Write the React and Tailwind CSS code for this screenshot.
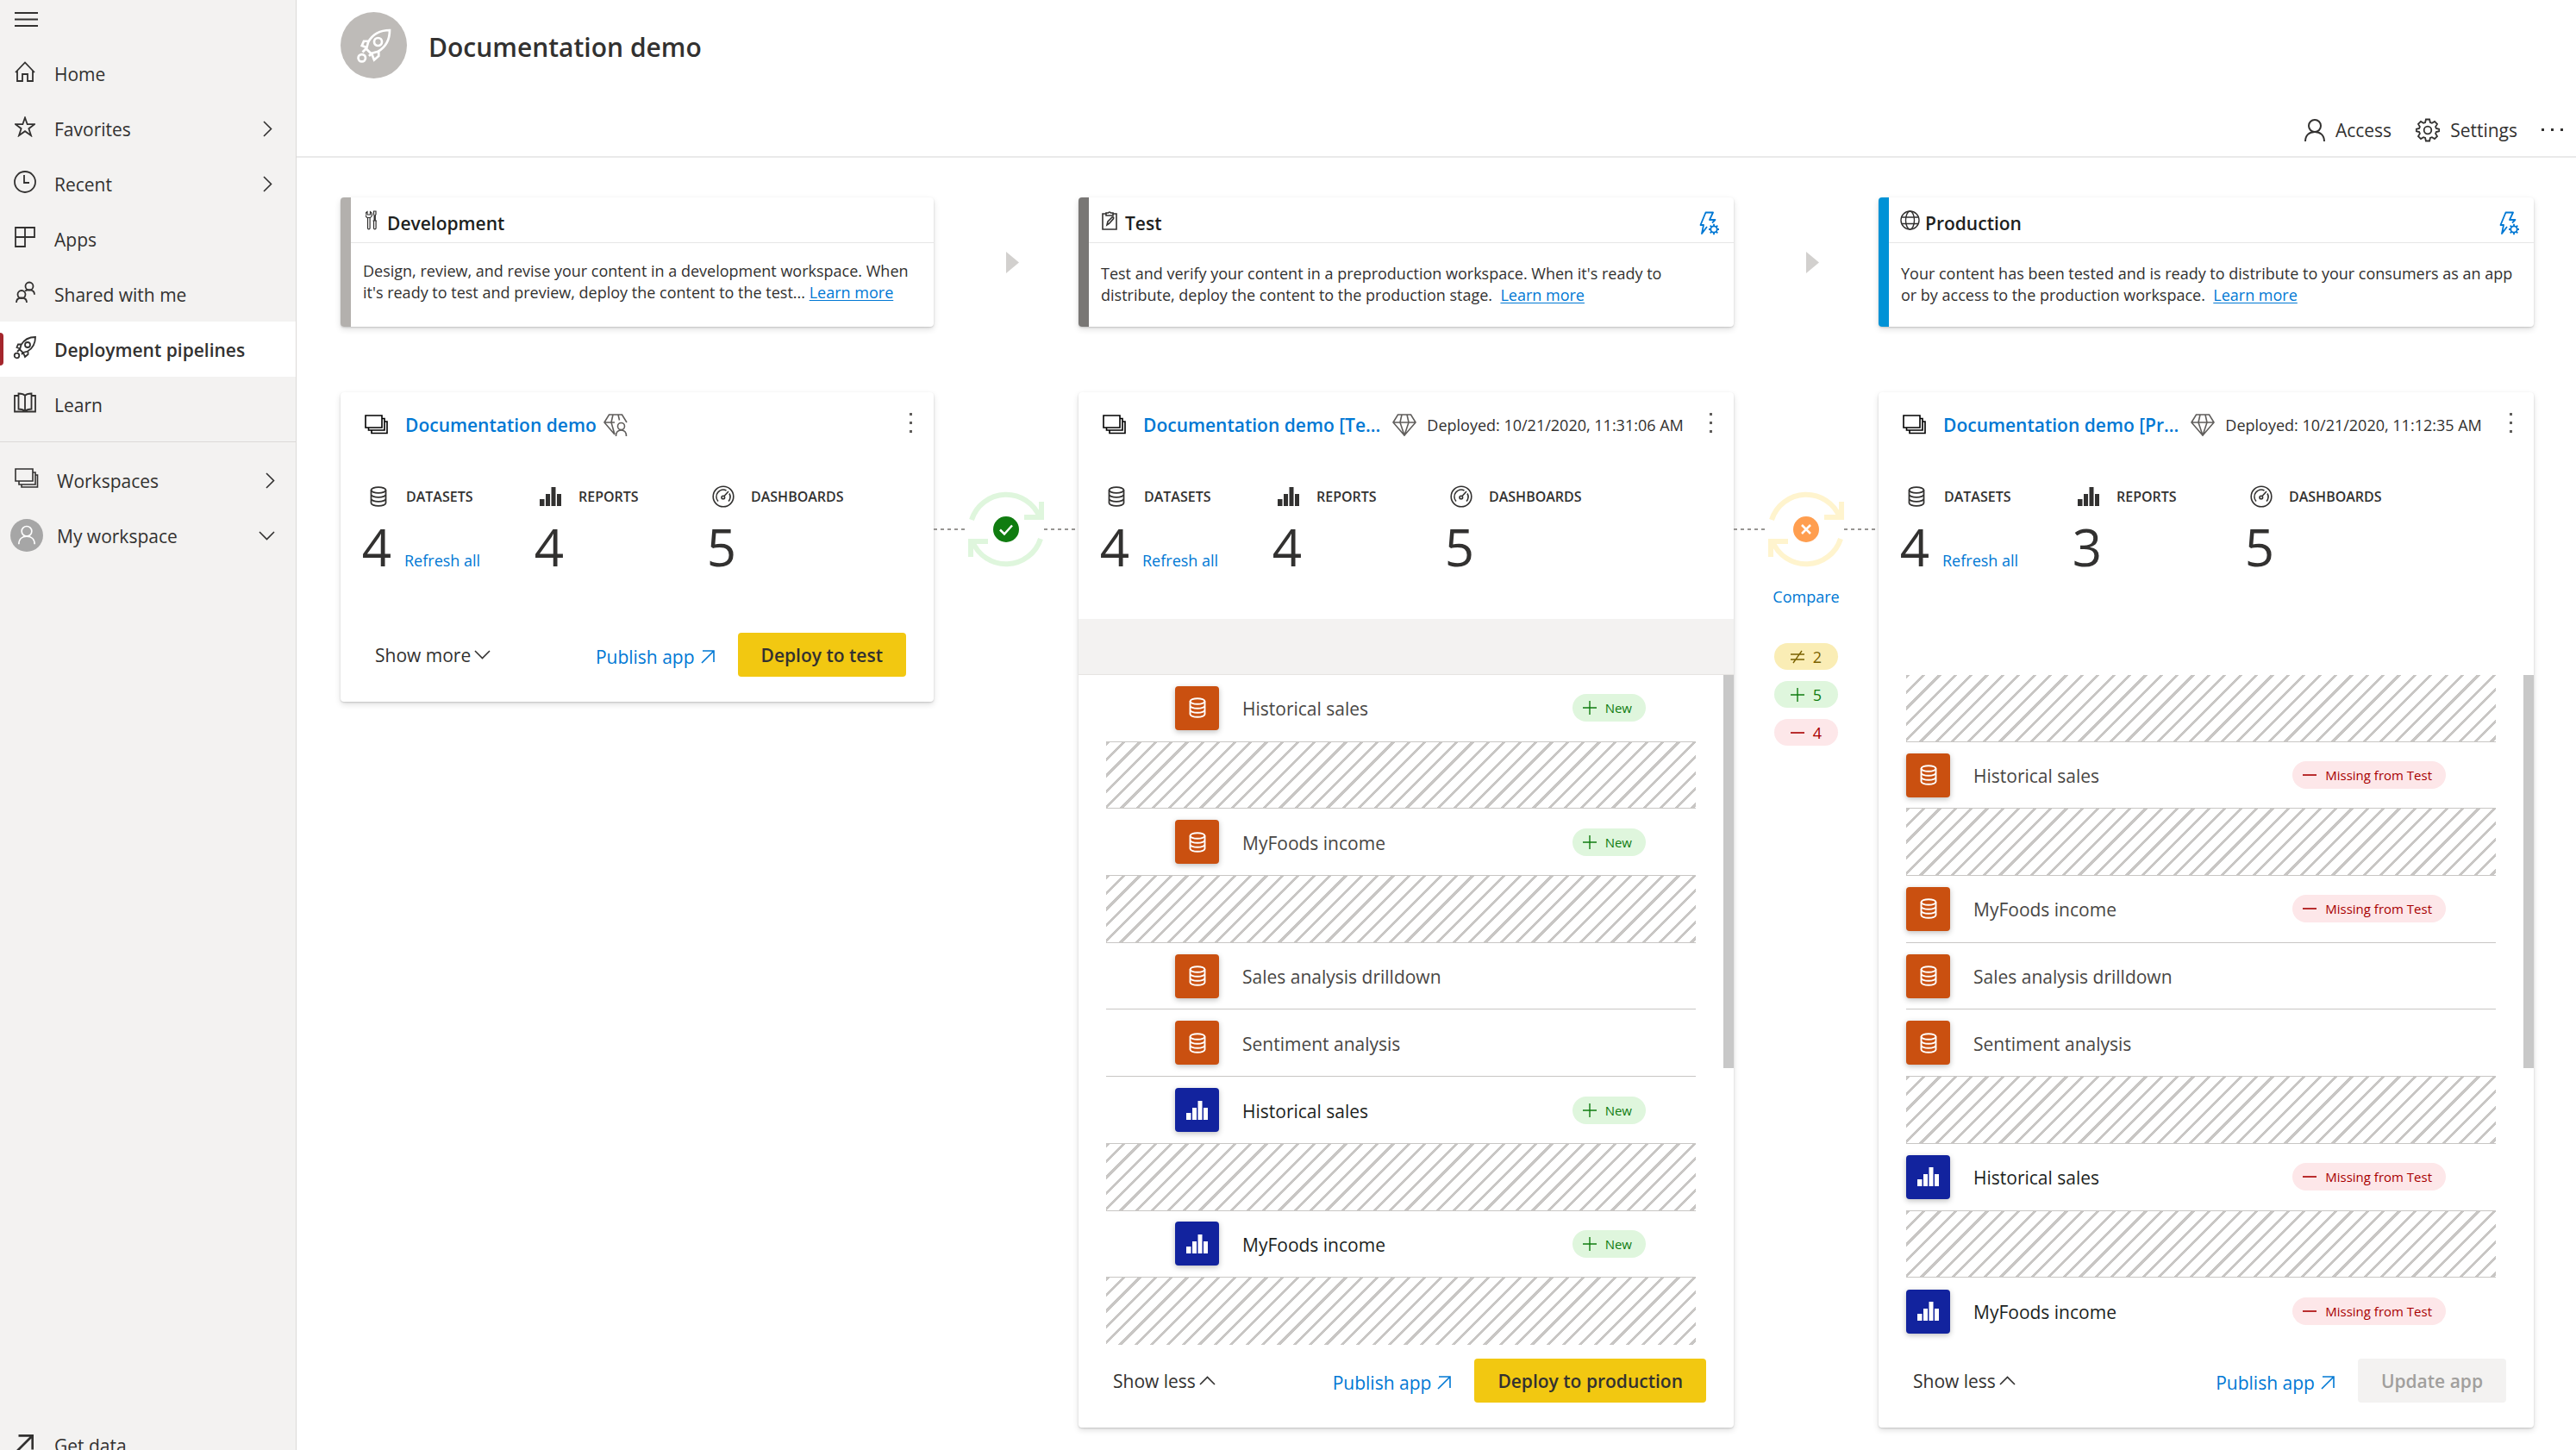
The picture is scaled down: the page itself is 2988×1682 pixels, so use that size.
function Svg({ w, h, vb, sw = 2, children, className = "" }) {
  return (
    <svg
      width={w}
      height={h}
      viewBox={vb || `0 0 ${w} ${h}`}
      fill="none"
      stroke="currentColor"
      strokeWidth={sw}
      className={"shrink-0 " + className}
      aria-hidden="true"
    >
      {children}
    </svg>
  );
}

const HomeIcon = () => (
  <Svg w={24} h={24} sw={1.800}>
    <path d="M1 13 12 1.500 23 13M3 11v12h6v-8h6v8h6V11" />
  </Svg>
);
const StarIcon = () => (
  <Svg w={24} h={24}>
    <path d="m12 1.500 2.700 7.700H23l-6.600 5 2.600 8-7-5-7 5 2.600-8L1 9.200h8.300z" strokeWidth="1.800" />
  </Svg>
);
const ClockIcon = () => (
  <Svg w={26} h={26} sw={1.800}>
    <circle cx="13" cy="13" r="12" />
    <path d="M12 5v9h6" />
  </Svg>
);
const AppsIcon = () => (
  <Svg w={24} h={24} sw={1.800}>
    <path d="M1 1h22v11H1zM1 12v11h11V1" />
  </Svg>
);
const PeopleIcon = () => (
  <Svg w={24} h={26} sw={1.800}>
    <circle cx="17" cy="6" r="4.500" />
    <circle cx="8" cy="15.500" r="4.500" />
    <path d="M2 25c0-3.500 2.500-5.500 6-5.500s6 2 6 5.500M12 11.500c1.500-1 3-1.200 5-1.200 3.500 0 6 2 6 5.500" />
  </Svg>
);
const RocketIcon = ({ size = 28 }) => (
  <Svg w={size} h={size} vb="0 0 28 28" sw={1.800}>
    <path d="M26 2C18 2 13 5 9.500 11L8 16.500l3.500 3.500 5.500-1.500C23 15 26 10 26 2zM10.500 10.500H6L4.500 14l4 1.500M17.500 17.500V22L14 25l-2-5M8 16l-3 3M12 20l-2 2" />
    <circle cx="17" cy="11" r="3" />
    <circle cx="4.500" cy="23.500" r="2.800" />
  </Svg>
);
const BookIcon = () => (
  <Svg w={26} h={24} sw={1.800}>
    <path d="M13 4C11 1.500 8 1.500 5.500 1.500v18c3 0 5.500.500 7.500 2.500 2-2 4.500-2.500 7.500-2.500v-18c-2.500 0-5.500 0-7.500 2.500zM13 4v18M5.500 4H1v18.500h24V4h-4.500" />
  </Svg>
);
const StackWideIcon = () => (
  <Svg w={28} h={24} sw={1.600}>
    <path d="M1 1h20v14H1zM21 5h3v14H5v-4M24 8h2.500v14H8v-3" />
  </Svg>
);
const StackIcon = () => (
  <Svg w={28} h={24} sw={1.600} className="text-black">
    <path d="M1 1h19v14H1zM20 4.500h3V18H4.500v-3M23 8h3v13.500H8V18" />
  </Svg>
);
const PersonIcon = ({ w = 24, h = 26, sw = 2 }) => (
  <Svg w={w} h={h} vb="0 0 24 26" sw={sw}>
    <circle cx="12" cy="8" r="7" />
    <path d="M1 26c0-7 4.500-11 11-11s11 4 11 11" />
  </Svg>
);
const GearIcon = () => (
  <Svg w={28} h={28} sw={1.800}>
    <path d="M11.900 1.500h4.200l.8 3.500 2 .8 3.100-1.900 3 3-1.900 3.100.8 2 3.500.8v2.400l-3.500.8-.8 2 1.900 3.100-3 3-3.100-1.900-2 .8-.8 3.500h-4.200l-.8-3.500-2-.8-3.100 1.900-3-3 1.900-3.100-.8-2-3.500-.8v-2.400l3.500-.8.8-2L3 6.900l3-3 3.100 1.900 2-.8z" />
    <circle cx="14" cy="14" r="4.300" />
  </Svg>
);
const ChevronRight = () => (
  <Svg w={11} h={19}>
    <path d="m1 1 8.500 8.500L1 18" strokeWidth="1.600" />
  </Svg>
);
const ChevronDown = () => (
  <Svg w={19} h={11}>
    <path d="m1 1 8.500 8.500L18 1" strokeWidth="1.600" />
  </Svg>
);
const ChevronUp = () => (
  <Svg w={19} h={11}>
    <path d="m1 10 8.500-8.500L18 10" strokeWidth="1.600" />
  </Svg>
);
const ToolsIcon = () => (
  <Svg w={14} h={23} sw={1.200}>
    <path d="M2.500 8.500v12a1.300 1.300 0 0 0 2.600 0v-12M2 1.500a4 4 0 0 0 0 7h3.500a4 4 0 0 0 0-7V5h-3.500zM9.500 1h2.500v3.500l-.7 1.500v6h-1.200V6l-.6-1.500zM8.500 12h4.500M9.500 12v8.500a1.300 1.300 0 0 0 2.600 0V12" />
  </Svg>
);
const ClipboardIcon = () => (
  <Svg w={18} h={23} sw={1.600}>
    <path d="M5 4H1v18h16V4h-4M5 6V3h2.500a1.600 1.600 0 0 1 3 0H13v3zM6 17l1-4 5-5c1.500-.500 2 .500 1.500 1.700l-4.800 5.500z" />
  </Svg>
);
const GlobeIcon = () => (
  <Svg w={23} h={23} sw={1.400}>
    <circle cx="11.500" cy="11.500" r="10.500" />
    <ellipse cx="11.500" cy="11.500" rx="5" ry="10.500" />
    <path d="M2 8h19M2 15.500h19" />
  </Svg>
);
const BoltGearIcon = () => (
  <Svg w={24} h={28} sw={1.800}>
    <path d="M9 18 3 26l2-10H1.500L7.500 1.500H16L12 10h6.500l-3.500 3.500" strokeLinejoin="round" />
    <circle cx="17" cy="21" r="3.700" />
    <path d="M17 14.800v2.500M17 24.700v2.500M11 21h2.300M20.700 21H23M12.700 16.700l1.700 1.700M19.600 23.600l1.700 1.700M12.700 25.300l1.700-1.700M19.600 18.400l1.700-1.700" />
  </Svg>
);
const DiamondIcon = () => (
  <Svg w={28} h={26} sw={1.600} className="text-[#605e5c]">
    <path d="M6.500 1h15l5.500 9-13 15L1 10zM1 10h26M11 1l-2 9 5 15 5-15-2-9" />
  </Svg>
);
const DiamondPersonIcon = () => (
  <Svg w={28} h={26} sw={1.600} className="text-[#605e5c]">
    <path d="M13 24 1 10 6.500 1h15l5.500 9M1 10h12M11 1l-2 9 4 14M17 1l1.500 6.500" />
    <circle cx="20.500" cy="14.500" r="4" />
    <path d="M14.500 26c0-4.500 2.500-7 6-7s6 2.500 6 7" />
  </Svg>
);
const DatabaseIcon = ({ w = 20, h = 24, sw = 1.800 }) => (
  <Svg w={w} h={h} vb="0 0 20 24" sw={sw}>
    <ellipse cx="10" cy="4.500" rx="8.500" ry="3.300" />
    <path d="M1.500 4.500v15c0 1.800 3.800 3.300 8.500 3.300s8.500-1.500 8.500-3.300v-15M1.500 9.500c0 1.800 3.800 3.300 8.500 3.300s8.500-1.500 8.500-3.300M1.500 14.500c0 1.800 3.800 3.300 8.500 3.300s8.500-1.500 8.500-3.300" />
  </Svg>
);
const BarsIcon = () => (
  <Svg w={26} h={22} sw={0}>
    <path fill="currentColor" d="M0 14h5.500v8H0zM7 8h5v14H7zM13.500 0h5v22h-5zM20 8h5v14h-5z" />
  </Svg>
);
const GaugeIcon = () => (
  <Svg w={26} h={26} sw={1.600}>
    <circle cx="13" cy="13" r="11.800" />
    <path d="M7 18.500A8 8 0 0 1 16.500 6M20 9.500a8 8 0 0 1-1 9M14 12.500 19 7" />
    <circle cx="12.800" cy="14" r="1.800" />
  </Svg>
);
const ArrowUpRight = ({ size = 16, sw = 1.600 }) => (
  <Svg w={size} h={size} vb="0 0 16 16" sw={sw}>
    <path d="M2 1h13v13M15 1 1 15" />
  </Svg>
);
const PlusIcon = () => (
  <Svg w={16} h={16} sw={1.400}>
    <path d="M8 0v16M0 8h16" />
  </Svg>
);
const MinusIcon = () => (
  <Svg w={16} h={16} sw={1.600}>
    <path d="M0 8h16" />
  </Svg>
);
const NotEqualIcon = () => (
  <Svg w={16} h={16} sw={1.400}>
    <path d="M0 5h16M0 11h16M3 15 13 1" />
  </Svg>
);

function NavItem({ icon, label, active, chevron, wide }) {
  return (
    <li>
      <button
        className={
          "relative flex h-16 w-full items-center text-left " +
          (wide ? "pr-6 " : "pr-[27px] ") +
          (active ? "bg-white font-semibold" : "")
        }
      >
        {active && <span className="absolute top-[13px] left-0 h-[38px] w-1 rounded-r-sm bg-[#a4262c]" />}
        <span className={"flex shrink-0 items-center justify-center pb-1 " + (wide ? "w-[62px]" : "w-[57px]")}>
          {icon}
        </span>
        <span className={"flex-1 pt-0.5 " + (wide ? "pl-1" : "pl-1.5")}>{label}</span>
        {chevron}
      </button>
    </li>
  );
}

function Sidebar() {
  return (
    <aside className="flex h-screen w-[344px] shrink-0 flex-col overflow-hidden border-r border-[#dcdad8] bg-[#f3f2f1] text-[21px] leading-7">
      <button aria-label="Collapse navigation" className="flex h-[53px] items-start pt-[14px] pl-[17px]">
        <Svg w={27} h={17}>
          <path d="M0 1h27M0 8.500h27M0 16h27" />
        </Svg>
      </button>
      <nav className="flex flex-1 flex-col">
        <ul className="border-b border-[#dcdad8] pb-[11px]">
          <NavItem icon={<HomeIcon />} label="Home" />
          <NavItem icon={<StarIcon />} label="Favorites" chevron={<ChevronRight />} />
          <NavItem icon={<ClockIcon />} label="Recent" chevron={<ChevronRight />} />
          <NavItem icon={<AppsIcon />} label="Apps" />
          <NavItem icon={<PeopleIcon />} label="Shared with me" />
          <NavItem icon={<RocketIcon />} label="Deployment pipelines" active />
          <NavItem icon={<BookIcon />} label="Learn" />
        </ul>
        <ul className="pt-3">
          <NavItem wide icon={<StackWideIcon />} label="Workspaces" chevron={<ChevronRight />} />
          <NavItem
            wide
            icon={
              <span className="mt-1 flex size-[38px] items-end justify-center rounded-full bg-[#a6a6a6] pb-2 text-white">
                <PersonIcon w={20} h={23} />
              </span>
            }
            label="My workspace"
            chevron={<ChevronDown />}
          />
        </ul>
        <ul className="mt-auto h-[38px]">
          <NavItem icon={<ArrowUpRight size={20} sw={2.200} />} label="Get data" />
        </ul>
      </nav>
    </aside>
  );
}

function TopBar() {
  return (
    <header className="border-b-2 border-[#eaeaea] pt-[14px]">
      <div className="flex items-center gap-[25px] pl-[51px]">
        <span className="flex size-[77px] items-center justify-center rounded-full bg-[#bebbb8] text-white">
          <RocketIcon size={42} />
        </span>
        <h1 className="pt-1 text-[30px] leading-10 font-semibold">Documentation demo</h1>
      </div>
      <div className="mt-[30px] flex h-[60px] items-center justify-end gap-7 pr-[14px] text-[21px] leading-7">
        <button className="flex items-center gap-3">
          <PersonIcon />
          Access
        </button>
        <button className="flex items-center gap-3">
          <GearIcon />
          Settings
        </button>
        <button aria-label="More options">
          <Svg w={26} h={4} sw={0}>
            <path fill="currentColor" d="M0 0h3v3H0zM11 0h3v3h-3zM22 0h3v3h-3z" />
          </Svg>
        </button>
      </div>
    </header>
  );
}

const cardShadow = "shadow-[0_3px_7px_rgba(0,0,0,0.13),0_1px_2px_rgba(0,0,0,0.15)]";

function StageHeader({ bar, icon, title, rules, tight, children }) {
  return (
    <section className={"flex h-[150px] overflow-hidden rounded bg-white " + cardShadow}>
      <div className={"w-3 shrink-0 " + bar} />
      <div className="min-w-0 flex-1">
        <div className="flex h-[53px] items-center gap-2 border-b border-[#e6e6e6] pt-2 pr-4 pl-[14px]">
          <span className="flex w-5 justify-center pb-2">{icon}</span>
          <h2 className="text-[21px] leading-7 font-semibold text-[#201f1e]">{title}</h2>
          {rules && (
            <button aria-label="Deployment rules" className="ml-auto text-[#0078d4]">
              <BoltGearIcon />
            </button>
          )}
        </div>
        <p className={"pl-[14px] text-[18px] leading-[25px] whitespace-nowrap " + (tight ? "pt-5" : "pt-[23px]")}>
          {children}
        </p>
      </div>
    </section>
  );
}

const LearnMore = () => (
  <a href="#learn" className="text-[#0078d4] underline underline-offset-2">
    Learn more
  </a>
);

const NextStage = () => (
  <div className="flex items-center justify-center pl-[15px]">
    <Svg w={15} h={25} sw={0}>
      <path fill="#d2d0ce" d="M0 0 15 12.500 0 25z" />
    </Svg>
  </div>
);

function Stat({ icon, label, value, refresh }) {
  return (
    <div>
      <div className="flex h-8 items-center gap-3">
        <span className="flex w-10 justify-center">{icon}</span>
        <span className="text-[16px] leading-6 font-semibold">{label}</span>
      </div>
      <div className="mt-3 flex items-baseline gap-[14px]">
        <span className="w-9 text-center text-[60px] leading-[60px]">{value}</span>
        {refresh && (
          <button className="text-[18px] leading-6 whitespace-nowrap text-[#0078d4]">Refresh all</button>
        )}
      </div>
    </div>
  );
}

function StageCard({ title, deployed, counts, toggle, action, disabled, children }) {
  return (
    <section className={"self-start overflow-hidden rounded bg-white " + cardShadow}>
      <div className="flex h-[76px] items-center pr-6 pl-7">
        <StackIcon />
        <a href="#workspace" className="ml-[19px] text-[21px] leading-7 font-semibold whitespace-nowrap text-[#0078d4]">
          {title}
        </a>
        <span className={deployed ? "ml-[14px]" : "ml-2"}>{deployed ? <DiamondIcon /> : <DiamondPersonIcon />}</span>
        {deployed && (
          <span className="ml-3 text-[18px] leading-6 whitespace-nowrap">Deployed: {deployed}</span>
        )}
        <button aria-label="Stage options" className="ml-auto pb-1 text-[#605e5c]">
          <Svg w={4} h={24} sw={0}>
            <path fill="currentColor" d="M0 0h3v3H0zM0 10h3v3H0zM0 20h3v3H0z" />
          </Svg>
        </button>
      </div>
      <div className="grid h-[187px] grid-cols-[200px_200px_1fr] content-start pt-[29px] pl-6">
        <Stat icon={<DatabaseIcon />} label="DATASETS" value={counts[0]} refresh />
        <Stat icon={<BarsIcon />} label="REPORTS" value={counts[1]} />
        <Stat icon={<GaugeIcon />} label="DASHBOARDS" value={counts[2]} />
      </div>
      {children}
      <div className="flex h-24 items-start pt-4 pr-8 pl-10 text-[21px] leading-7">
        <button className="flex h-[51px] items-center gap-1 whitespace-nowrap">
          {toggle}
          {toggle === "Show more" ? <ChevronDown /> : <ChevronUp />}
        </button>
        <button className="ml-auto flex h-[51px] items-center gap-[7px] pt-1 whitespace-nowrap text-[#0078d4]">
          Publish app
          <ArrowUpRight />
        </button>
        <button
          disabled={disabled}
          className={
            "ml-[27px] h-[51px] rounded-sm px-[27px] font-semibold whitespace-nowrap " +
            (disabled ? "bg-[#f3f2f1] text-[#a19f9d]" : "bg-[#f2c811]")
          }
        >
          {action}
        </button>
      </div>
    </section>
  );
}

function ItemRow({ item, indent, badge }) {
  if (!item) {
    return (
      <li className="bg-[repeating-linear-gradient(135deg,#c8c6c4_0px,#c8c6c4_3px,#ffffff_3px,#ffffff_13px)]" />
    );
  }
  const { kind, name, flagged } = item;
  return (
    <li className={"flex items-center pr-[58px] " + (indent ? "pl-20" : "")}>
      <span
        className={
          "flex size-[51px] shrink-0 items-center justify-center rounded-sm text-white shadow-[0_2px_6px_rgba(0,0,0,0.25)] " +
          (kind === "dataset" ? "bg-[#ca5010]" : "bg-[#12239e]")
        }
      >
        {kind === "dataset" ? <DatabaseIcon sw={1.900} /> : <BarsIcon />}
      </span>
      <span className={"ml-[27px] pt-0.5 text-[21px] leading-7 " + (kind === "dataset" ? "text-[#484644]" : "text-[#201f1e]")}>
        {name}
      </span>
      {flagged && (
        <span
          className={
            "ml-auto flex h-8 items-center gap-2.5 rounded-full pr-4 pl-3 text-[15px] leading-5 whitespace-nowrap " +
            (badge === "New" ? "bg-[#dff6dd] text-[#107c10]" : "bg-[#fde7e9] text-[#a80000]")
          }
        >
          {badge === "New" ? <PlusIcon /> : <MinusIcon />}
          {badge}
        </span>
      )}
    </li>
  );
}

function ItemList({ items, indent, badge }) {
  return (
    <div className="flex h-[777px] justify-between">
      <ul className="mr-8 ml-8 grid flex-1 auto-rows-fr divide-y divide-[#c8c6c4]">
        {items.map((item, i) => (
          <ItemRow key={i} item={item} indent={indent} badge={badge} />
        ))}
      </ul>
      <div className="h-[456px] w-3 bg-[#c8c8c8]" />
    </div>
  );
}

function Connector({ ring, disc, mark, children }) {
  return (
    <div className="flex flex-col items-center pt-[115px]">
      <div className="flex w-full items-center">
        <div className="h-[2px] flex-1 bg-[repeating-linear-gradient(90deg,#979593_0px,#979593_4px,#ffffff_4px,#ffffff_8px)]" />
        <Svg w={88} h={88} sw={6}>
          <g stroke={ring}>
            <path d="M4 33A42 42 0 0 1 83 30M84 55A42 42 0 0 1 5 58" />
            <path d="M85 12v18H65M3 76V58h20" />
          </g>
          <circle cx="44" cy="44" r="15" fill={disc} stroke="none" />
          <path d={mark} stroke="#ffffff" strokeWidth="2.500" />
        </Svg>
        <div className="h-[2px] flex-1 bg-[repeating-linear-gradient(90deg,#979593_0px,#979593_4px,#ffffff_4px,#ffffff_8px)]" />
      </div>
      {children}
    </div>
  );
}

function DiffPill({ tone, icon, count }) {
  return (
    <li className={"flex h-[31px] w-[74px] items-center justify-center gap-2.5 rounded-full text-[18px] leading-6 " + tone}>
      {icon}
      {count}
    </li>
  );
}

const d = (name, flagged) => ({ kind: "dataset", name, flagged });
const r = (name, flagged) => ({ kind: "report", name, flagged });

const testItems = [
  d("Historical sales", true),
  null,
  d("MyFoods income", true),
  null,
  d("Sales analysis drilldown"),
  d("Sentiment analysis"),
  r("Historical sales", true),
  null,
  r("MyFoods income", true),
  null,
];
const productionItems = [
  null,
  d("Historical sales", true),
  null,
  d("MyFoods income", true),
  d("Sales analysis drilldown"),
  d("Sentiment analysis"),
  null,
  r("Historical sales", true),
  null,
  r("MyFoods income", true),
];

export default function App() {
  return (
    <div className="flex h-screen overflow-hidden bg-white font-['Open_Sans','Noto_Sans',sans-serif] text-[#323130]">
      <Sidebar />
      <div className="min-w-0 flex-1">
        <TopBar />
        <main className="grid grid-cols-[688fr_168px_760fr_168px_760fr] gap-y-[76px] pt-[46px] pr-[49px] pl-[51px]">
          <StageHeader bar="bg-[#b3b0ad]" icon={<ToolsIcon />} title="Development" tight>
            Design, review, and revise your content in a development workspace. When
            <br />
            it's ready to test and preview, deploy the content to the test... <LearnMore />
          </StageHeader>
          <NextStage />
          <StageHeader bar="bg-[#797775]" icon={<ClipboardIcon />} title="Test" rules>
            Test and verify your content in a preproduction workspace. When it's ready to
            <br />
            distribute, deploy the content to the production stage.&nbsp; <LearnMore />
          </StageHeader>
          <NextStage />
          <StageHeader bar="bg-[#0092d6]" icon={<GlobeIcon />} title="Production" rules>
            Your content has been tested and is ready to distribute to your consumers as an app
            <br />
            or by access to the production workspace.&nbsp; <LearnMore />
          </StageHeader>

          <StageCard title="Documentation demo" counts={[4, 4, 5]} toggle="Show more" action="Deploy to test" />
          <Connector ring="#dff6dd" disc="#107c10" mark="m37 44.500 5 5 9-10" />
          <StageCard
            title="Documentation demo [Te..."
            deployed="10/21/2020, 11:31:06 AM"
            counts={[4, 4, 5]}
            toggle="Show less"
            action="Deploy to production"
          >
            <div className="h-[65px] border-b border-[#e6e4e2] bg-[#f3f2f1]" />
            <ItemList items={testItems} indent badge="New" />
          </StageCard>
          <Connector ring="#fff4ce" disc="#ff9e4f" mark="m39 39 10 10M49 39 39 49">
            <button className="mt-[22px] text-[18px] leading-6 text-[#0078d4]">Compare</button>
            <ul className="mt-[42px] flex flex-col gap-[13px]">
              <DiffPill tone="bg-[#faedb5] text-[#7a6200]" icon={<NotEqualIcon />} count={2} />
              <DiffPill tone="bg-[#dff6dd] text-[#107c10]" icon={<PlusIcon />} count={5} />
              <DiffPill tone="bg-[#fde7e9] text-[#a80000]" icon={<MinusIcon />} count={4} />
            </ul>
          </Connector>
          <StageCard
            title="Documentation demo [Pr..."
            deployed="10/21/2020, 11:12:35 AM"
            counts={[4, 3, 5]}
            toggle="Show less"
            action="Update app"
            disabled
          >
            <div className="h-[65px]" />
            <ItemList items={productionItems} badge="Missing from Test" />
          </StageCard>
        </main>
      </div>
    </div>
  );
}
